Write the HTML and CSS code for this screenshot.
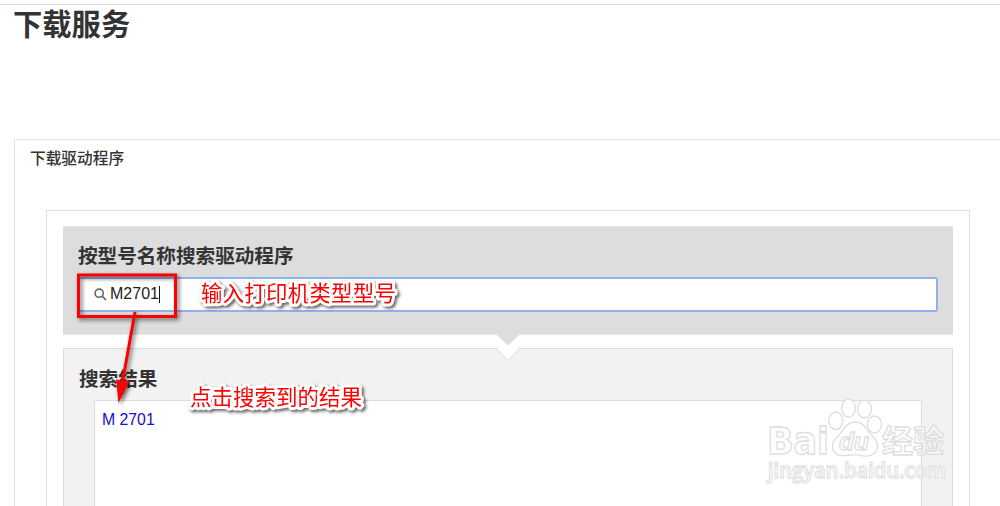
FILE: index.html
```html
<!DOCTYPE html>
<html lang="zh-CN">
<head>
<meta charset="utf-8">
<title>下载服务</title>
<link rel="stylesheet" href="styles.css">
</head>
<body>
<main class="page">
  <h1 class="page-title">下载服务</h1>
  <section class="panel">
    <h2 class="panel-title">下载驱动程序</h2>
    <div class="finder">
      <div class="search">
        <h3 class="heading">按型号名称搜索驱动程序</h3>
        <div class="field">
          <svg class="glass" viewBox="0 0 13 13"><circle cx="5.2" cy="5.2" r="4.1"/><path d="M8.3 8.3L12 11.8"/></svg>
          <span class="query">M2701</span><span class="caret"></span>
        </div>
      </div>
      <div class="results">
        <h3 class="heading">搜索结果</h3>
        <div class="list"><a class="result">M 2701</a></div>
      </div>
    </div>
  </section>
</main>
<svg class="overlay" viewBox="0 0 1000 506">
  <path class="notch-fill" d="M496 347.500H520L508 360Z"/>
  <path class="notch-line" d="M496 348.500L508 360.500L520 348.500"/>
  <path class="notch-gray" d="M496 334H520L508 345.500Z"/>
  <g class="mark">
    <text class="mark-bai" x="767" y="454" textLength="62" lengthAdjust="spacingAndGlyphs">Bai</text>
    <ellipse cx="835.700" cy="420.800" rx="7" ry="8.800"/>
    <ellipse cx="848.500" cy="408.200" rx="6.800" ry="9"/>
    <ellipse cx="864.500" cy="409.200" rx="7" ry="8.800"/>
    <ellipse cx="874.500" cy="424.500" rx="7" ry="8.500"/>
    <path d="M855 422C847 422 844 429 840 434C835 439 831 442 833 449C835 457 843 456 850 455C854 454.500 859 455 864 456C871 457 877 453 877.500 446C878 439 871 436 868 431C865 426 862 422 855 422Z"/>
    <text class="mark-du" x="839" y="450" textLength="30" lengthAdjust="spacingAndGlyphs">du</text>
    <text class="mark-cn" x="882" y="452" textLength="62" lengthAdjust="spacingAndGlyphs">经验</text>
    <text class="mark-url" x="768" y="478" textLength="178" lengthAdjust="spacingAndGlyphs">jingyan.baidu.com</text>
  </g>
  <g class="callout">
    <rect x="78.500" y="275" width="97" height="41.500"/>
    <path class="arrow-line" d="M135 312L122.500 382"/>
    <path class="arrow-head" d="M118.500 403L116 379L122 381.500L129.500 381Z"/>
  </g>
  <text class="note" x="201" y="301" textLength="195">输入打印机类型型号</text>
  <text class="note" x="190" y="404.500" textLength="172">点击搜索到的结果</text>
</svg>
</body>
</html>
```
FILE: styles.css
```css
* { box-sizing: border-box; }

body {
  margin: 0;
  height: 506px;
  overflow: hidden;
  background: #fff;
  color: #333;
  font-family: "Liberation Sans", "Noto Sans CJK SC", sans-serif;
}

.page {
  display: flex;
  flex-direction: column;
  height: 506px;
  padding-top: 4px;
  overflow: hidden;
}

.page-title {
  flex: none;
  height: 135px;
  margin: 0;
  border-top: 1px solid #dedee2;
  font-size: 29.3px;
  line-height: 40px;
  text-indent: 13px;
}

.panel {
  flex: none;
  height: 400px;
  margin-left: 14px;
  padding-left: 31px;
  border: solid #e2e2e2;
  border-width: 1px 0 0 1px;
  border-top-left-radius: 2px;
}

.panel-title {
  height: 70px;
  margin: 0 0 0 -16px;
  font-size: 15.7px;
  font-weight: 500;
  line-height: 37px;
}

.finder {
  display: flex;
  flex-direction: column;
  gap: 13px;
  width: 924px;
  height: 330px;
  padding: 15px 16px 0;
  border: 1px solid #e1e1e1;
}

.search {
  flex: none;
  height: 109px;
  padding: 11px 15px 0;
  background: #ddd;
  border: solid #e6e6e6;
  border-width: 1px 0;
}

.heading {
  margin: 0;
  font-size: 19.6px;
  font-weight: 700;
  line-height: 36px;
}

.field {
  display: flex;
  align-items: center;
  height: 35px;
  margin-top: 3px;
  padding-left: 14px;
  background: #fff;
  border: 2px solid #8db2ec;
  border-radius: 3px;
  color: #222;
}

.glass {
  width: 13px;
  height: 13px;
  margin-right: 3px;
  fill: none;
  stroke: #666;
  stroke-width: 1.6;
}

.query { padding-bottom: 2px; font-size: 16px; }
.caret { width: 1px; height: 17px; background: #111; }

.results {
  flex: none;
  height: 180px;
  padding: 12px 30px 0 15px;
  background: #f2f2f2;
  border: 1px solid #ddd;
}

.list {
  height: 140px;
  margin: 3px 0 0 15px;
  padding: 9px 7px;
  background: #fff;
  border: 1px solid #ddd;
}

.result {
  display: block;
  color: #1a0dcd;
  font-size: 15.8px;
  line-height: 19px;
}

.overlay {
  position: absolute;
  top: 0;
  left: 0;
  width: 1000px;
  height: 506px;
}

.notch-gray { fill: #ddd; }
.notch-fill { fill: #fff; }
.notch-line { fill: none; stroke: #ddd; }

.callout rect, .arrow-line { fill: none; stroke: #f00; stroke-width: 3; }
.arrow-head { fill: #f00; }
.callout { filter: drop-shadow(2px 2px 2px rgba(0, 0, 0, .6)); }

.note {
  fill: #f00;
  stroke: #fff;
  stroke-width: 6px;
  stroke-linejoin: round;
  paint-order: stroke;
  font: 400 21.5px "Noto Sans CJK SC", sans-serif;
  filter: drop-shadow(2px 2px 1.5px rgba(0, 0, 0, .6));
}

.mark {
  fill: #fff;
  fill-opacity: .85;
  stroke: #dedede;
  stroke-width: 1.3;
}

.mark-bai { font: bold 38px "DejaVu Sans", sans-serif; }
.mark-du { font: italic bold 24px "Liberation Sans", sans-serif; }
.mark-cn { font: bold 31px "Noto Sans CJK SC", sans-serif; }
.mark-url { font: 600 21px "Open Sans", sans-serif; stroke: #e3e3e3; }
```
